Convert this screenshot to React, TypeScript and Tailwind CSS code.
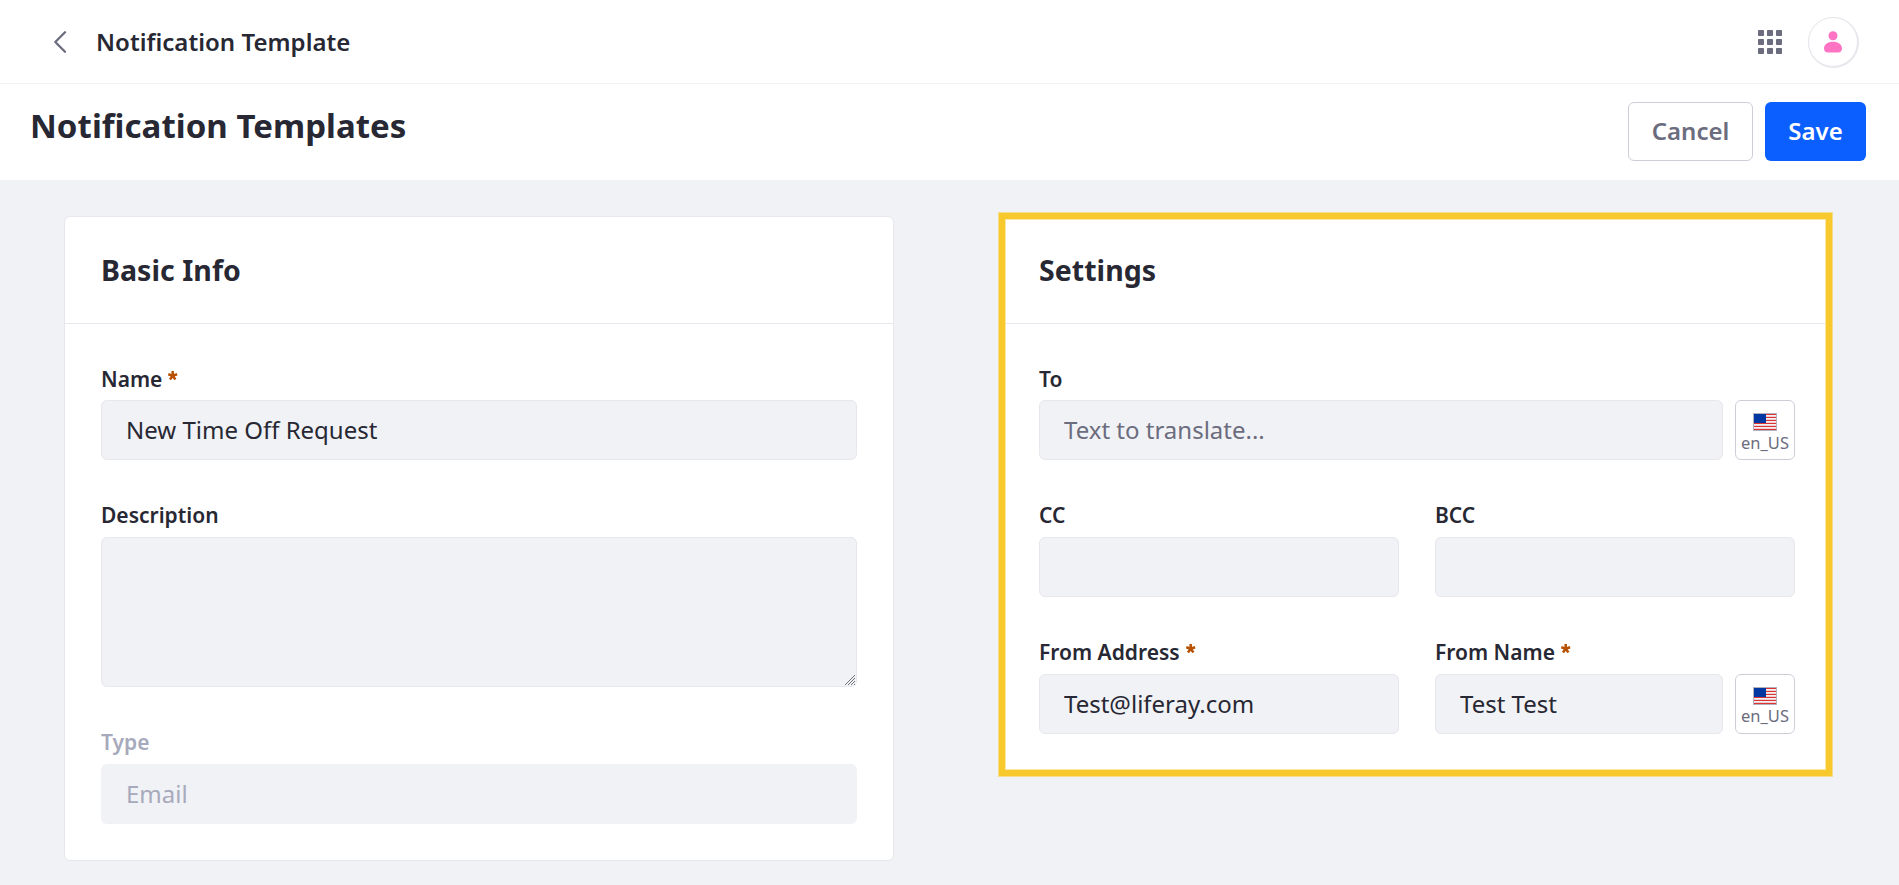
import type { ReactNode } from "react";

function Asterisk() {
  return (
    <svg className="mt-[7px] ml-1.5" width="10" height="9" viewBox="0 0 10 9" stroke="#b95000" strokeWidth="2.5" fill="none">
      <path d="M4.700 0v4.700M0.300 3.200l4.400 1.500M9.100 3.200 4.700 4.700M2 8.500l2.700-3.800M7.400 8.500 4.700 4.700" />
    </svg>
  );
}

type LabelProps = { children: ReactNode; required?: boolean; muted?: boolean; first?: boolean };

function Label({ children, required, muted, first }: LabelProps) {
  return (
    <label
      className={`flex whitespace-nowrap text-[21px] leading-[31px] font-semibold ${first ? "mt-px mb-[5px]" : "mb-1.5"} ${muted ? "text-[#a7a9bc]" : "text-[#272833]"}`}
    >
      {children}
      {required && <Asterisk />}
    </label>
  );
}

const field =
  "block h-[60px] w-full min-w-0 rounded-md border border-[#e7e7ed] bg-[#f1f2f5] px-6 pb-0.5 text-[24px] text-[#272833] placeholder:text-[#6b6c7e] placeholder:opacity-100 outline-none";

function Flag() {
  return (
    <svg width="24" height="18" viewBox="0 0 24 18" shapeRendering="crispEdges">
      <rect width="24" height="18" fill="#b3b0c0" />
      <rect x="1" y="1" width="22" height="16" fill="#f4f0f0" />
      {[1, 4, 7, 10, 13, 16].map((y) => (
        <rect key={y} x="1" y={y} width="22" height="1" fill="#dd3333" />
      ))}
      {[3, 6, 9, 12, 15].map((y) => (
        <rect key={y} x="1" y={y} width="22" height="1" fill="#ecd2d4" />
      ))}
      <rect x="1" y="1" width="12" height="9" fill="#0037a0" />
    </svg>
  );
}

function LocaleButton({ tight }: { tight?: boolean }) {
  return (
    <button className="flex h-[60px] w-[60px] shrink-0 flex-col items-center rounded-md border border-[#cdced9] bg-white pt-3 text-[#6b6c7e]">
      <Flag />
      <span className={`text-[16.5px] leading-[21px] ${tight ? "mt-0" : "mt-px"}`}>en_US</span>
    </button>
  );
}

const gripDots = [0, 3, 6, 9].flatMap((start) =>
  Array.from({ length: 10 - start }, (_, i) => ({ x: start + i, y: 9 - i })),
);

function ResizeGrip() {
  return (
    <svg
      className="pointer-events-none absolute right-0.5 bottom-0.5"
      width="10"
      height="10"
      viewBox="0 0 10 10"
      shapeRendering="crispEdges"
      fill="#727275"
    >
      {gripDots.map(({ x, y }) => (
        <rect key={`${x}-${y}`} x={x} y={y} width="1" height="1" />
      ))}
    </svg>
  );
}

function CardHeader({ children }: { children: ReactNode }) {
  return (
    <h2 className="flex h-[107px] items-center border-b border-[#e7e7ed] px-9 text-[28.5px] font-bold tracking-[0.04px] text-[#272833]">
      {children}
    </h2>
  );
}

export default function App() {
  return (
    <div className="flex h-[885px] flex-col bg-[#f1f2f5] font-['Noto_Sans',sans-serif] text-[#272833]">
      <header className="flex h-[84px] shrink-0 items-center border-b border-[#f1f2f5] bg-white pr-[41px] pl-[53px]">
        <svg
          className="mt-px"
          width="14"
          height="24"
          viewBox="0 0 14 24"
          fill="none"
          stroke="#6b6c7e"
          strokeWidth="2.3"
          strokeLinecap="round"
          strokeLinejoin="round"
        >
          <path d="M12 2.300 2.300 12 12 21.700" />
        </svg>
        <span className="ml-[29px] text-[24px] font-semibold tracking-[0.03px]">Notification Template</span>
        <svg className="mt-px ml-auto" width="24" height="24" viewBox="0 0 24 24" fill="#6b6c7e">
          {[0, 9, 18].map((y) => [0, 9, 18].map((x) => <rect key={`${x}-${y}`} x={x} y={y} width="6" height="6" rx="0.75" />))}
        </svg>
        <span className="mt-px ml-[26px] flex h-[50px] w-[50px] items-center justify-center rounded-full border border-[#e7e7ed] bg-white shadow-[0.5px_0.5px_0_0.5px_#e7e7ed]">
          <svg className="shrink-0" width="18" height="22" viewBox="0 0 18 22" fill="#ff73c3">
            <circle cx="9" cy="4.8" r="4.5" />
            <path d="M9 10.700c-5 0-9 2.700-9 6.600 0 3 1.600 4.200 4 4.200h10c2.400 0 4-1.200 4-4.200 0-3.900-4-6.600-9-6.600Z" />
          </svg>
        </span>
      </header>
      <div className="flex h-24 shrink-0 items-start justify-between bg-white pt-[18px] pr-[33px] pl-[30px]">
        <h1 className="text-[33px] leading-[48px] font-bold tracking-[0.04px]">Notification Templates</h1>
        <div className="flex gap-3">
          <button className="h-[59px] w-[125px] rounded-md border border-[#cdced9] pb-0.5 text-[24px] font-semibold text-[#6b6c7e]">
            Cancel
          </button>
          <button className="h-[59px] w-[101px] rounded-md bg-[#0b5fff] pb-0.5 text-[24px] font-semibold text-white">Save</button>
        </div>
      </div>
      <main className="flex items-start gap-[108px] pt-9 pl-16">
        <section className="h-[645px] w-[830px] rounded-md border border-[#e7e7ed] bg-white">
          <CardHeader>Basic Info</CardHeader>
          <div className="flex flex-col gap-10 px-9 pt-[39px]">
            <div className="flow-root">
              <Label required first>
                Name
              </Label>
              <input className={field} defaultValue="New Time Off Request" />
            </div>
            <div>
              <Label>Description</Label>
              <div className="relative">
                <textarea className="block h-[150px] w-full resize-none rounded-md border border-[#e7e7ed] bg-[#f1f2f5] outline-none" />
                <ResizeGrip />
              </div>
            </div>
            <div>
              <Label muted>Type</Label>
              <div className="flex h-[60px] items-center rounded-md bg-[#f1f2f5] px-[25px] text-[24px] text-[#a7a9bc]">Email</div>
            </div>
          </div>
        </section>
        <section className="relative h-[556px] w-[830px] rounded-md border border-[#e7e7ed] bg-white">
          <CardHeader>Settings</CardHeader>
          <div className="grid grid-cols-2 gap-x-9 gap-y-10 px-9 pt-[39px]">
            <div className="col-span-2 flow-root">
              <Label first>To</Label>
              <div className="flex gap-3">
                <input className={field} placeholder="Text to translate..." />
                <LocaleButton />
              </div>
            </div>
            <div>
              <Label>CC</Label>
              <input className={field} />
            </div>
            <div>
              <Label>BCC</Label>
              <input className={field} />
            </div>
            <div>
              <Label required>From Address</Label>
              <input className={field} defaultValue="Test@liferay.com" />
            </div>
            <div>
              <Label required>From Name</Label>
              <div className="flex gap-3">
                <input className={field} defaultValue="Test Test" />
                <LocaleButton tight />
              </div>
            </div>
          </div>
          <div className="pointer-events-none absolute -top-[5px] -right-0.5 -bottom-[6px] -left-[5px] border border-[#f4dd8c]">
            <div className="h-full border-[6px] border-[#f7c92d]">
              <div className="h-full border border-[#fbe7a3]" />
            </div>
          </div>
        </section>
      </main>
    </div>
  );
}
